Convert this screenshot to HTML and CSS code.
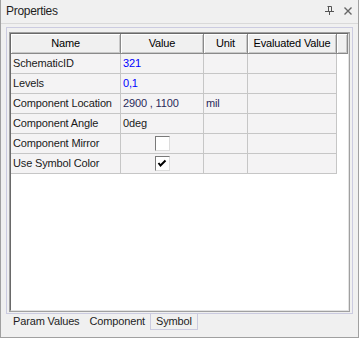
FILE: index.html
```html
<!DOCTYPE html>
<html lang="en">
<head>
    <meta charset="UTF-8">
    <meta name="viewport" content="width=device-width, initial-scale=1.0">
    <title>Properties</title>
    <link rel="stylesheet" href="styles.css">
</head>
<body>
    <div class="window">
        <div class="titlebar">
            <span class="title">Properties</span>
            <div class="tools">
                <svg class="pin" width="9" height="9" viewBox="0 0 9 9">
                    <path d="M2.5 0.5 H6.5 V5.5 M3.5 0.5 V5.5 M0 5.5 H9 M4.5 5.5 V9" stroke="#555" stroke-width="1" fill="none"/>
                </svg>
                <svg class="close" width="8" height="8" viewBox="0 0 8 8">
                    <path d="M0.5 0.5 L7.5 7.5 M7.5 0.5 L0.5 7.5" stroke="#666" stroke-width="1.4" fill="none"/>
                </svg>
            </div>
        </div>
        <div class="content">
            <div class="frame">
                <div class="grid">
                    <div class="grid-inner">
                        <div class="row head">
                            <div class="cell">Name</div>
                            <div class="cell">Value</div>
                            <div class="cell">Unit</div>
                            <div class="cell">Evaluated Value</div>
                            <div class="cell"></div>
                        </div>
                        <div class="row">
                            <div class="cell">SchematicID</div>
                            <div class="cell blue">321</div>
                            <div class="cell"></div>
                            <div class="cell"></div>
                            <div class="cell empty"></div>
                        </div>
                        <div class="row">
                            <div class="cell">Levels</div>
                            <div class="cell blue">0,1</div>
                            <div class="cell"></div>
                            <div class="cell"></div>
                            <div class="cell empty"></div>
                        </div>
                        <div class="row">
                            <div class="cell">Component Location</div>
                            <div class="cell navy">2900 , 1100</div>
                            <div class="cell navy">mil</div>
                            <div class="cell"></div>
                            <div class="cell empty"></div>
                        </div>
                        <div class="row">
                            <div class="cell">Component Angle</div>
                            <div class="cell">0deg</div>
                            <div class="cell"></div>
                            <div class="cell"></div>
                            <div class="cell empty"></div>
                        </div>
                        <div class="row">
                            <div class="cell">Component Mirror</div>
                            <div class="cell check-cell"><span class="checkbox"></span></div>
                            <div class="cell"></div>
                            <div class="cell"></div>
                            <div class="cell empty"></div>
                        </div>
                        <div class="row">
                            <div class="cell">Use Symbol Color</div>
                            <div class="cell check-cell">
                                <span class="checkbox">
                                    <svg width="13" height="13" viewBox="0 0 13 13">
                                        <path d="M2.5 6 L4.5 8.5 L9.5 3.5" stroke="#000" stroke-width="2" fill="none"/>
                                    </svg>
                                </span>
                            </div>
                            <div class="cell"></div>
                            <div class="cell"></div>
                            <div class="cell empty"></div>
                        </div>
                    </div>
                </div>
            </div>
            <div class="tabs">
                <div class="tab">Param Values</div>
                <div class="tab">Component</div>
                <div class="tab active">Symbol</div>
            </div>
        </div>
    </div>
</body>
</html>
```

FILE: styles.css
```css
* {
    margin: 0;
    padding: 0;
    box-sizing: border-box;
}

body {
    background: #f0f0f0;
    font-family: 'Liberation Sans', Arial, sans-serif;
    font-size: 11px;
    letter-spacing: -0.15px;
    color: #1a1a1a;
}

.window {
    width: 359px;
    height: 338px;
    background: #f0f0f0;
    border: 1px solid #a0a0a0;
    border-top: none;
}

.titlebar {
    height: 24px;
    display: flex;
    align-items: center;
    justify-content: space-between;
    padding: 0 6px 1px 5px;
    border-bottom: 1px solid #d9d9d9;
}

.title {
    font-size: 12px;
    letter-spacing: -0.3px;
    color: #1e1e1e;
}

.tools {
    display: flex;
    align-items: center;
    gap: 10px;
}

.pin {
    margin-top: -1px;
}

.content {
    padding: 3px 5px 0 5px;
}

.frame {
    height: 287px;
    border: 1px solid #cbcbe0;
    padding: 4px 2px 1px 2px;
}

.grid {
    height: 280px;
    border: 1px solid #a0a0a0;
    background: #fff;
}

.grid-inner {
    height: 100%;
    border-left: 1px solid #696969;
    border-top: 1px solid #696969;
    border-right: 1px solid #e3e3e3;
    border-bottom: 1px solid #e3e3e3;
}

.row {
    display: grid;
    grid-template-columns: 110px 83px 44px 89px 11px;
}

.cell {
    height: 20px;
    line-height: 19px;
    padding-left: 2px;
    white-space: nowrap;
    overflow: hidden;
    background: #f4f3f4;
    border-right: 1px solid #c6c6c6;
    border-bottom: 1px solid #c6c6c6;
}

.cell.empty {
    background: #fff;
    border: none;
}

.head .cell {
    text-align: center;
    padding-left: 0;
    color: #000;
    background: #f0f0f0;
    border-right: 1px solid #8a8a8a;
    border-bottom: 1px solid #8a8a8a;
    box-shadow: inset 1px 1px 0 #fff, inset -1px -1px 0 #c8c8c8;
}

.blue {
    color: #0000ff;
}

.navy {
    color: #2a2a5a;
}

.check-cell {
    display: flex;
    justify-content: center;
    align-items: center;
    padding-left: 0;
}

.checkbox {
    width: 15px;
    height: 15px;
    background: #fff;
    border-left: 1px solid #7a7a7a;
    border-top: 1px solid #7a7a7a;
    border-right: 1px solid #dcdcdc;
    border-bottom: 1px solid #dcdcdc;
    display: flex;
}

.tabs {
    display: flex;
    padding-left: 2px;
}

.tab {
    height: 16px;
    line-height: 15px;
    padding: 0 5px;
    color: #1e1e1e;
}

.tab.active {
    border: 1px solid #cbcbe0;
    border-top: none;
    padding: 0 5px;
}
```
